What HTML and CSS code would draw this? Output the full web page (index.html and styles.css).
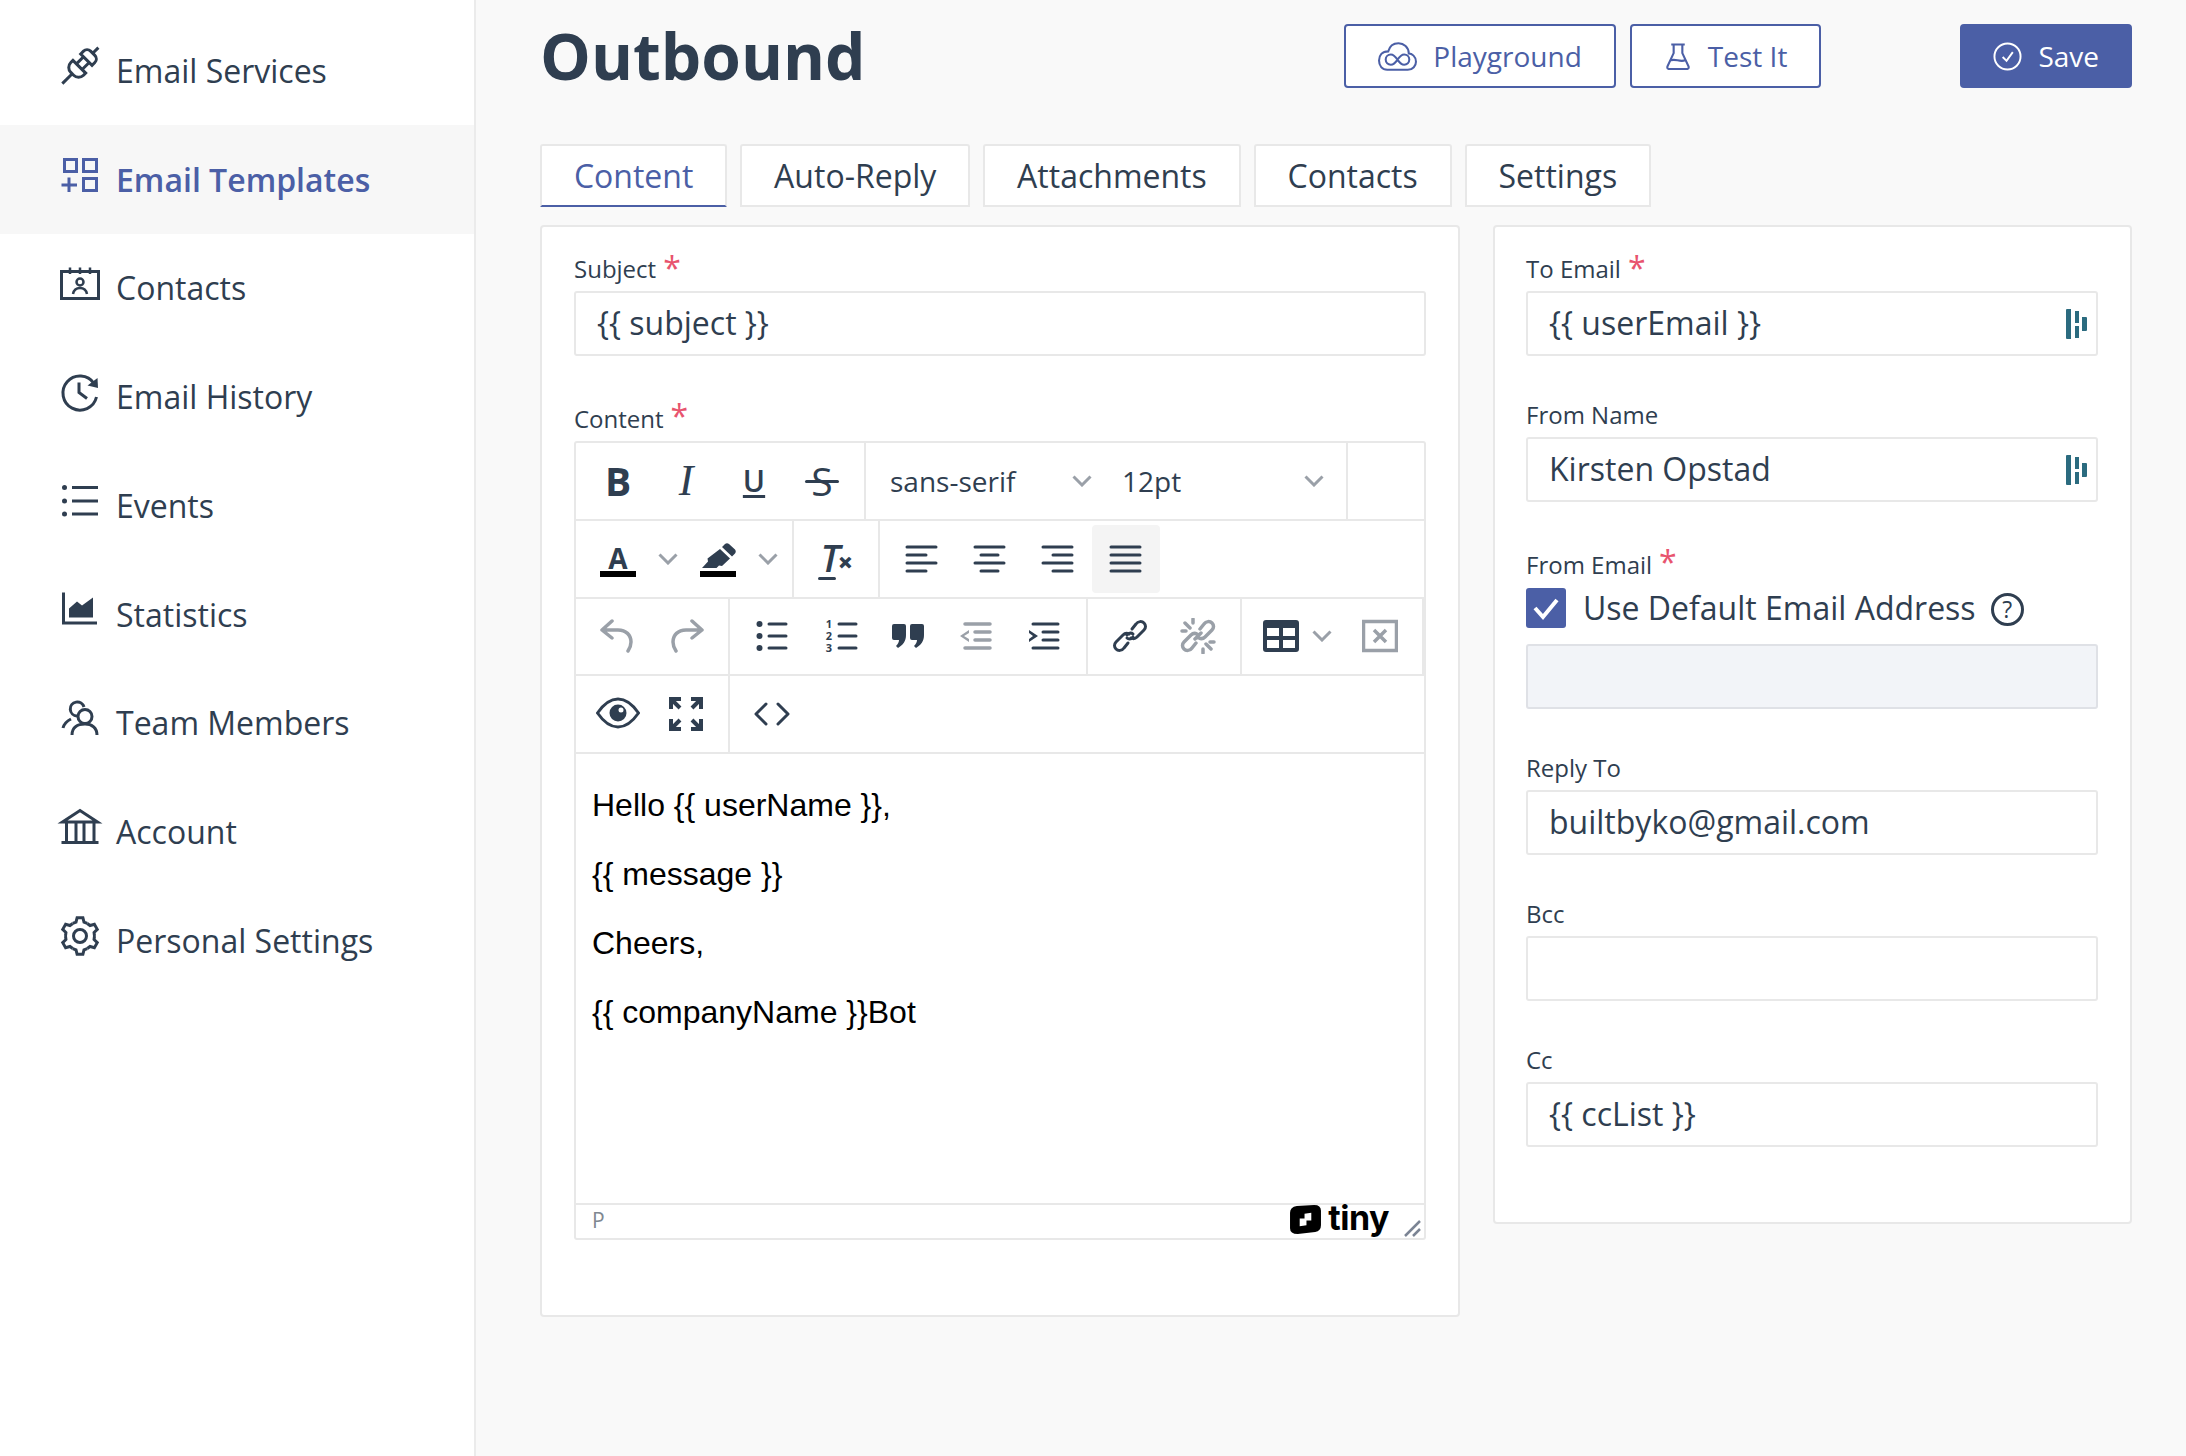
FILE: index.html
```html
<!DOCTYPE html>
<html lang="en">
<head>
<meta charset="utf-8">
<title>Outbound</title>
<link rel="stylesheet" href="styles.css">
</head>
<body>
<div class="app">
  <nav class="sidebar">
    <a class="nav-item"><svg class="nav-icon" viewBox="0 0 40 40"><g transform="rotate(45 20 20)"><path d="M20 -6V2M12 11V7a5 5 0 0 1 5-5h6a5 5 0 0 1 5 5v4zM16 11v10M24 11v10M11 21h18v3a7 7 0 0 1-7 7h-4a7 7 0 0 1-7-7zM20 31v14"/></g></svg><span>Email Services</span></a>
    <a class="nav-item active"><svg class="nav-icon" viewBox="0 0 40 40"><path d="M4.500 4.500h12v12h-12zM23.500 4.500h13v12h-13zM23.500 23.500h13v12h-13zM1.500 30H17M9 22.500V37"/></svg><span>Email Templates</span></a>
    <a class="nav-item"><svg class="nav-icon" viewBox="0 0 40 40"><path d="M1.500 7.500h37v27h-37z"/><path class="fine" d="M10 3.500V10M20 3.500V10M30 3.500V10M13 30c1-5 4-6 7-6s6 1 7 6"/><circle class="fine" cx="20" cy="18" r="3.500"/></svg><span>Contacts</span></a>
    <a class="nav-item"><svg class="nav-icon" viewBox="0 0 40 40"><path d="M34 10.500A17 17 0 1 0 36.500 24M19 9.500v10l8 6"/><path class="solid" d="M27.500 12.500 38 15 37.500 5z"/></svg><span>Email History</span></a>
    <a class="nav-item"><svg class="nav-icon" viewBox="0 0 40 40"><path d="M12 6.500h26M12 20h26M12 33h26"/><circle class="solid" cx="4.500" cy="6.500" r="2.500"/><circle class="solid" cx="4.500" cy="20" r="2.500"/><circle class="solid" cx="4.500" cy="33" r="2.500"/></svg><span>Events</span></a>
    <a class="nav-item"><svg class="nav-icon" viewBox="0 0 40 40"><path d="M3.500 2.500V33H37"/><path class="solid" d="M9 27.500v-9l8-7 5 4 11-8v20z"/></svg><span>Statistics</span></a>
    <a class="nav-item"><svg class="nav-icon" viewBox="0 0 40 40"><circle cx="25" cy="17.500" r="7"/><path d="M12 36c0-8 6-11 13-11s12 4 12 11M17 17a7 7 0 1 1 7-9M3 29c1-4 4-7 8-9"/></svg><span>Team Members</span></a>
    <a class="nav-item"><svg class="nav-icon" viewBox="0 0 40 40"><path d="M2.500 14 20 2.500 37.500 14zM6.500 14v19M16 14v19M24 14v19M34 14v19M1.500 34.500h37"/></svg><span>Account</span></a>
    <a class="nav-item"><svg class="nav-icon" viewBox="0 0 40 40"><circle cx="20" cy="20" r="6.500"/><path d="M12.750 7.440 16 6.060l1.110-4.330h5.780L24 6.060l3.250 1.380"/><path transform="rotate(60 20 20)" d="M12.750 7.440 16 6.060l1.110-4.330h5.780L24 6.060l3.250 1.380"/><path transform="rotate(120 20 20)" d="M12.750 7.440 16 6.060l1.110-4.330h5.780L24 6.060l3.250 1.380"/><path transform="rotate(180 20 20)" d="M12.750 7.440 16 6.060l1.110-4.330h5.780L24 6.060l3.250 1.380"/><path transform="rotate(240 20 20)" d="M12.750 7.440 16 6.060l1.110-4.330h5.780L24 6.060l3.250 1.380"/><path transform="rotate(300 20 20)" d="M12.750 7.440 16 6.060l1.110-4.330h5.780L24 6.060l3.250 1.380"/></svg><span>Personal Settings</span></a>
  </nav>

  <main class="main">
    <header class="page-head">
      <h1 class="title">Outbound</h1>
      <button class="btn btn-outline"><svg class="btn-icon" viewBox="1 1 38 28"><path d="M10 28h20c5 0 8-4 8-8 0-5-4-8-7-8 0-6-5-10-10-10-6 0-9 4-10 8-6 0-9 4-9 9s3 9 8 9zM20 18c-2-3-4-5-6.500-5a4.800 4.800 0 0 0 0 10c2.500 0 4.500-2 6.500-5s4-5 6.500-5a4.800 4.800 0 0 1 0 10c-2.500 0-4.500-2-6.500-5z"/></svg>Playground</button>
      <button class="btn btn-outline"><svg class="btn-icon flask" viewBox="0 0 26 28"><path d="M6 1.500h14M8.500 1.500v9L2 24.500q-.5 2.500 2 2.500h18q2.500 0 2-2.500l-6.500-14v-9M5.500 18c5-2 9 2 15 0"/></svg>Test It</button>
      <button class="btn btn-solid"><svg class="btn-icon check" viewBox="0 0 30 30"><circle cx="15" cy="15" r="13.500"/><path d="M10 15.500l4 4 6.500-9"/></svg>Save</button>
    </header>

    <div class="tabs">
      <div class="tab tab-active">Content</div>
      <div class="tab">Auto-Reply</div>
      <div class="tab">Attachments</div>
      <div class="tab">Contacts</div>
      <div class="tab">Settings</div>
    </div>

    <div class="columns">
      <section class="card card-left">
        <div class="field">
          <div class="label">Subject <span class="req">*</span></div>
          <div class="input">{{ subject }}</div>
        </div>
        <div class="field">
          <div class="label label-tight">Content <span class="req">*</span></div>
          <div class="editor">
            <div class="tb-row">
              <div class="tb-group">
                <div class="tb-btn"><span class="g-bold">B</span></div>
                <div class="tb-btn"><span class="g-italic">I</span></div>
                <div class="tb-btn"><span class="g-under">U</span></div>
                <div class="tb-btn"><span class="g-strike">S</span></div>
              </div>
              <div class="tb-group tb-selects">
                <div class="tb-select">sans-serif<svg class="chev" viewBox="0 0 20 12"><path d="M1.500 1.500 10 10l8.500-8.500"/></svg></div>
                <div class="tb-select">12pt<svg class="chev" viewBox="0 0 20 12"><path d="M1.500 1.500 10 10l8.500-8.500"/></svg></div>
              </div>
            </div>
            <div class="tb-row">
              <div class="tb-group">
                <div class="tb-split"><div class="tb-main"><span class="g-color">A</span></div><svg class="chev" viewBox="0 0 20 12"><path d="M1.500 1.500 10 10l8.500-8.500"/></svg></div>
                <div class="tb-split"><div class="tb-main tb-marker"><svg class="ic marker" viewBox="0 0 36 26"><path class="solid" d="M25 1q2-1.500 4 0l6 5.500q1.500 2 0 4l-3 3L22 4zM20 6l10 9.500-8 7.500-3-.5-2.500 2.500H2l6-6.500-.5-3z"/></svg><i class="swatch"></i></div><svg class="chev" viewBox="0 0 20 12"><path d="M1.500 1.500 10 10l8.500-8.500"/></svg></div>
              </div>
              <div class="tb-group">
                <div class="tb-btn"><span class="g-clear">T<b>×</b></span></div>
              </div>
              <div class="tb-group tb-last">
                <div class="tb-btn"><svg class="ic" viewBox="0 0 36 36"><path class="line" d="M3 6h29M3 14h19M3 22h29M3 30h19"/></svg></div>
                <div class="tb-btn"><svg class="ic" viewBox="0 0 36 36"><path class="line" d="M3 6h29M9 14h17M3 22h29M9 30h17"/></svg></div>
                <div class="tb-btn"><svg class="ic" viewBox="0 0 36 36"><path class="line" d="M3 6h29M13 14h19M3 22h29M13 30h19"/></svg></div>
                <div class="tb-btn tb-on"><svg class="ic" viewBox="0 0 36 36"><path class="line" d="M3 6h29M3 14h29M3 22h29M3 30h29"/></svg></div>
              </div>
            </div>
            <div class="tb-row">
              <div class="tb-group">
                <div class="tb-btn"><svg class="ic off" viewBox="0 0 36 36"><path class="line" d="M12 3 2 12l10 8M3 12h15c8 0 13 5 13 12 0 3-1 6-3 9"/></svg></div>
                <div class="tb-btn"><svg class="ic off" viewBox="0 0 36 36"><path class="line" d="M24 3l10 9-10 8M33 12H18C10 12 5 17 5 24c0 3 1 6 3 9"/></svg></div>
              </div>
              <div class="tb-group">
                <div class="tb-btn"><svg class="ic" viewBox="0 0 36 36"><circle class="solid" cx="5.500" cy="6" r="3"/><circle class="solid" cx="5.500" cy="18" r="3"/><circle class="solid" cx="5.500" cy="30" r="3"/><path class="line" d="M15 6h17M15 18h17M15 30h17"/></svg></div>
                <div class="tb-btn tb-numlist"><span class="nums"><span>1</span><span>2</span><span>3</span></span><svg class="numlines" viewBox="0 0 22 36"><path d="M3 6h17M3 18h17M3 30h17"/></svg></div>
                <div class="tb-btn"><svg class="ic" viewBox="0 0 36 36"><path class="solid" d="M5 5h10q2 0 2 2v9c0 6-3 10-8 13l-2-2c2-2 3-4 3-6H5q-2 0-2-2V7q0-2 2-2zM23 5h10q2 0 2 2v9c0 6-3 10-8 13l-2-2c2-2 3-4 3-6h-5q-2 0-2-2V7q0-2 2-2z" transform="translate(-1 1)"/></svg></div>
                <div class="tb-btn"><svg class="ic off" viewBox="0 0 36 36"><path class="line" d="M7 6h25M17 14h15M17 22h15M7 30h25"/><path class="solid" d="M11 12 2 18l9 6v-3l-5-3 5-3z"/></svg></div>
                <div class="tb-btn"><svg class="ic" viewBox="0 0 36 36"><path class="line" d="M7 6h25M17 14h15M17 22h15M7 30h25"/><path class="solid" d="M3 12l9 6-9 6v-3l4-3-4-3z"/></svg></div>
              </div>
              <div class="tb-group">
                <div class="tb-btn"><svg class="ic" viewBox="0 0 36 36"><path class="line" d="M21 19c-2 3-5 2-6 1M15 17c2-3 5-2 6-1"/><path class="line" d="M16 25l-4 5c-2 3-6 3-8 1s-2-5 0-7l7-7c2-2 4-2 6-1M20 11l4-5c2-3 6-3 8-1s2 5 0 7l-7 7c-2 2-4 2-6 1"/></svg></div>
                <div class="tb-btn"><svg class="ic off" viewBox="0 0 36 36"><path class="line" d="M16 25l-4 5c-2 3-6 3-8 1s-2-5 0-7l7-7c2-2 4-2 6-1M20 11l4-5c2-3 6-3 8-1s2 5 0 7l-7 7c-2 2-4 2-6 1M15 21l6-6M5 5l5 5M2 13h4M13 1v4M31 31l-5-5M34 24h-4M23 35v-4"/></svg></div>
              </div>
              <div class="tb-group">
                <div class="tb-split tb-split-small"><div class="tb-main"><svg class="ic" viewBox="0 0 36 36"><path class="solid" fill-rule="evenodd" d="M3 2h30q3 0 3 3v26q0 3-3 3H3q-3 0-3-3V5q0-3 3-3zM4 10v8h12v-8zM20 10v8h12v-8zM4 22v8h12v-8zM20 22v8h12v-8z"/></svg></div><svg class="chev" viewBox="0 0 20 12"><path d="M1.500 1.500 10 10l8.500-8.500"/></svg></div>
                <div class="tb-btn"><svg class="ic off" viewBox="0 0 36 36"><path class="box" d="M1.500 3.500h33v29h-33zM12 12l12 12M24 12 12 24"/></svg></div>
              </div>
            </div>
            <div class="tb-row">
              <div class="tb-group">
                <div class="tb-btn"><svg class="ic ic-wide" viewBox="0 0 44 36"><path class="box" d="M1.500 17C7 9 14 3 22 3s15 6 20.500 14C37 25 30 31 22 31S7 25 1.500 17z"/><circle class="solid" cx="22" cy="17" r="8.500"/><circle class="hole" cx="25" cy="14" r="2.500"/></svg></div>
                <div class="tb-btn"><svg class="ic" viewBox="0 0 36 36"><path class="arrows" d="M3 13V3h10M3 3l9 9M23 3h10v10M33 3l-9 9M3 23v10h10M3 33l9-9M23 33h10V23M33 33l-9-9"/></svg></div>
              </div>
              <div class="tb-group tb-last">
                <div class="tb-btn"><svg class="ic" viewBox="0 0 36 36"><path class="line" d="M12 8 2 18l10 10M24 8l10 10-10 10"/></svg></div>
              </div>
            </div>
            <div class="editor-body">
              <p>Hello {{ userName }},</p>
              <p>{{ message }}</p>
              <p>Cheers,</p>
              <p>{{ companyName }}Bot</p>
            </div>
            <div class="status">
              <span class="status-path">P</span>
              <span class="tiny"><svg class="tiny-logo" viewBox="0 0 32 30"><path fill-rule="evenodd" d="M7 1 25 0q7 0 7 6v15q0 6-6 7L8 30q-8 0-8-6V8q0-6 7-7zM15 9v5h-5v8l7-1v-5h5V8z"/></svg>tiny</span>
              <svg class="grip" viewBox="0 0 18 18"><path d="M1 16 16 1M9 16l7-7"/></svg>
            </div>
          </div>
        </div>
      </section>

      <section class="card card-right">
        <div class="field">
          <div class="label">To Email <span class="req">*</span></div>
          <div class="input input-dash">{{ userEmail }}<svg class="dash" viewBox="0 0 21 30"><path d="M0 1q0-1 1-1h4v30H1q-1 0-1-1zM9 2h4v12H9zM9 17h4v12H9zM16 8h4q1 0 1 1v12q0 1-1 1h-4z"/></svg></div>
        </div>
        <div class="field">
          <div class="label">From Name</div>
          <div class="input input-dash">Kirsten Opstad<svg class="dash" viewBox="0 0 21 30"><path d="M0 1q0-1 1-1h4v30H1q-1 0-1-1zM9 2h4v12H9zM9 17h4v12H9zM16 8h4q1 0 1 1v12q0 1-1 1h-4z"/></svg></div>
        </div>
        <div class="field">
          <div class="label label-tight">From Email <span class="req">*</span></div>
          <div class="check-row">
            <span class="checkbox"><svg viewBox="0 0 40 40"><path d="M9 20l8 9 14-17"/></svg></span>
            <span class="check-text">Use Default Email Address</span>
            <span class="help">?</span>
          </div>
          <div class="input input-disabled"></div>
        </div>
        <div class="field">
          <div class="label">Reply To</div>
          <div class="input">builtbyko@gmail.com</div>
        </div>
        <div class="field">
          <div class="label">Bcc</div>
          <div class="input"></div>
        </div>
        <div class="field">
          <div class="label">Cc</div>
          <div class="input">{{ ccList }}</div>
        </div>
      </section>
    </div>
  </main>
</div>
</body>
</html>
```
FILE: styles.css
```css
* { box-sizing: border-box; }
html, body { margin: 0; padding: 0; }
body {
  font-family: "Open Sans", "Liberation Sans", sans-serif;
  color: #2f3e50;
  background: #f9f9f9;
}
.app { display: flex; height: 1456px; overflow: hidden; }

/* sidebar */
.sidebar {
  width: 476px;
  flex: none;
  background: #fff;
  border-right: 2px solid #ebebeb;
  padding-top: 16px;
}
.nav-item {
  display: flex;
  align-items: center;
  gap: 16px;
  height: 108.750px;
  padding-left: 60px;
  font-size: 32px;
  color: #2f3e50;
}
.nav-item.active { background: #f7f7f7; color: #4b5fa6; font-weight: 600; }
.nav-icon {
  width: 40px;
  height: 40px;
  flex: none;
  margin-top: -8px;
  overflow: visible;
  fill: none;
  stroke: currentColor;
  stroke-width: 3;
}
.nav-icon .fine { stroke-width: 2.500; }
.nav-icon .solid { fill: currentColor; stroke: none; }

/* header */
.main { flex: 1; padding: 24px 54px 0 64px; min-width: 0; }
.page-head { display: flex; align-items: center; gap: 14px; height: 64px; }
.title { flex: 1; margin: 0; font-size: 64px; line-height: 64px; font-weight: 700; color: #2f3e50; }
.btn {
  display: flex;
  align-items: center;
  justify-content: center;
  gap: 16px;
  height: 64px;
  padding: 0 32px;
  border-radius: 4px;
  font: 400 28px "Open Sans", sans-serif;
  border: 2px solid #4b5fa6;
}
.btn-outline { background: #fff; color: #4b5fa6; }
.btn-solid { background: #4b5fa6; color: #fff; margin-left: 125px; padding: 0 31px; }
.btn-icon { width: 39px; height: 29px; fill: none; stroke: currentColor; stroke-width: 2; }
.btn-icon.flask { width: 26px; height: 27px; margin: 0 1px; stroke-width: 2.200; }
.btn-icon.check { width: 29px; height: 29px; }

/* tabs */
.tabs { display: flex; gap: 13px; margin-top: 56px; }
.tab {
  height: 63px;
  padding: 0 31.900px;
  display: flex;
  align-items: center;
  background: #fff;
  border: 2px solid #e8e8e8;
  border-radius: 3px 3px 0 0;
  font-size: 32px;
  color: #2f3e50;
}
.tab-active { color: #4b5fa6; border-bottom-color: #4b5fa6; }

/* cards */
.columns { display: grid; grid-template-columns: 920px 639px; gap: 33px; align-items: start; margin-top: 18px; }
.card {
  background: #fff;
  border: 2px solid #e8e8e8;
  border-radius: 4px;
  padding: 26px 32px 0;
}
.card-left { height: 1092px; }
.card-right { height: 999px; padding-left: 31px; }
.field { margin-bottom: 43px; }
.label {
  display: flex;
  align-items: center;
  gap: 7px;
  height: 38px;
  padding-bottom: 8px;
  font-size: 24px;
  color: #2f3e50;
}
.label-tight { height: 42px; padding-bottom: 3px; }
.card-right .label-tight { height: 43px; padding-bottom: 4px; }
.req { color: #e8546e; font-size: 32px; line-height: 1; }
.label-tight .req { margin-top: -5px; }
.input {
  height: 65px;
  border: 2px solid #e8e8e8;
  border-radius: 3px;
  padding: 0 21px 2px;
  display: flex;
  align-items: center;
  justify-content: space-between;
  font-size: 32px;
  background: #fff;
}
.dash { width: 21px; height: 30px; fill: #2b6b7f; margin-right: -12px; margin-top: 2px; }
.input-disabled { background: #f2f4f8; border-color: #dfe1e6; }
.check-row { display: flex; align-items: center; height: 40px; margin-bottom: 16px; }
.checkbox {
  width: 40px;
  height: 40px;
  border-radius: 3px;
  background: #4b5fa6;
}
.checkbox svg { display: block; fill: none; stroke: #fff; stroke-width: 4; }
.check-text { margin-left: 17px; font-size: 32px; padding-bottom: 2px; }
.help {
  margin-left: 15px;
  width: 33px;
  height: 33px;
  border: 3px solid #2f3e50;
  border-radius: 50%;
  display: flex;
  align-items: center;
  justify-content: center;
  font-size: 23px;
  margin-top: 2px;
}

/* editor */
.editor { border: 2px solid #e8e8e8; border-radius: 3px; }
.tb-row { display: flex; height: 77.750px; border-bottom: 2px solid #e8e8e8; }
.tb-group { display: flex; align-items: center; padding: 0 8px; border-right: 2px solid #e8e8e8; }
.tb-last { border-right: 0; }
.tb-btn {
  width: 68px;
  height: 68px;
  border-radius: 4px;
  display: flex;
  align-items: center;
  justify-content: center;
  color: #2f3e50;
}
.tb-on { background: #f4f4f4; }
.tb-split { display: flex; align-items: center; width: 100px; }
.tb-main { width: 68px; height: 68px; display: flex; flex-direction: column; align-items: center; justify-content: center; }
.tb-split-small { width: 96px; }
.tb-split-small .tb-main { width: 62px; }
.tb-selects { padding: 0 8px; }
.tb-select {
  width: 232px;
  height: 68px;
  padding: 0 14px 0 16px;
  display: flex;
  align-items: center;
  justify-content: space-between;
  font-size: 28px;
}
.chev { width: 20px; height: 12px; flex: none; fill: none; stroke: #9aa0a8; stroke-width: 3; }
.tb-split .chev { margin-left: 6px; }
.tb-split-small .chev { margin-left: 0; }
.ic { width: 36px; height: 36px; display: block; fill: none; stroke: #2f3e50; }
.ic-wide { width: 44px; }
.ic .line { fill: none; stroke: #2f3e50; stroke-width: 3; stroke-linecap: round; stroke-linejoin: round; }
.ic .box { fill: none; stroke: #2f3e50; stroke-width: 3; }
.ic .arrows { fill: none; stroke: #2f3e50; stroke-width: 4; }
.ic .solid { fill: #2f3e50; stroke: none; }
.ic .hole { fill: #fff; stroke: none; }
.ic.off .line, .ic.off .box { stroke: #9aa0a8; stroke-width: 3.500; }
.ic.off .solid { fill: #9aa0a8; }
.nums { display: flex; flex-direction: column; width: 14px; font: 700 11px/12px "Open Sans", sans-serif; text-align: center; }
.numlines { width: 22px; height: 36px; fill: none; stroke: #2f3e50; stroke-width: 3; stroke-linecap: round; }

.g-bold { font: 700 39px/1 "Open Sans", sans-serif; }
.g-italic { font: italic 400 44px/1 "Liberation Serif", serif; }
.g-under { font: 600 30px/1 "Open Sans", sans-serif; text-decoration: underline; text-decoration-thickness: 3px; text-underline-offset: 3px; }
.g-strike { font: 500 39px/1 "Open Sans", sans-serif; position: relative; }
.g-strike::after { content: ""; position: absolute; left: -6px; right: -6px; top: 19px; height: 3px; border-radius: 2px; background: #2f3e50; }
.g-color { font: 700 28px/26px "Open Sans", sans-serif; display: block; border-bottom: 6px solid #000; width: 36px; text-align: center; height: 32px; margin-top: 4px; }
.tb-marker .marker { width: 36px; height: 26px; margin-top: 2px; margin-bottom: 2px; }
.swatch { display: block; width: 36px; height: 6px; background: #000; }
.g-clear { font: italic 600 38px/34px "Open Sans", sans-serif; position: relative; display: block; width: 31px; margin-top: -4px; }
.g-clear b { position: absolute; left: 17px; top: 10px; font: 800 27px/24px "Open Sans", sans-serif; }
.g-clear::after { content: ""; position: absolute; left: -3px; top: 37px; width: 18px; height: 3px; border-radius: 2px; background: #2f3e50; }

.editor-body {
  height: 449px;
  padding: 28.500px 16px 0;
  font: 400 32px/45px "Liberation Sans", sans-serif;
  color: #000;
}
.editor-body p { margin: 0 0 24.300px; }
.status {
  height: 35px;
  border-top: 2px solid #e8e8e8;
  display: flex;
  align-items: center;
  padding: 0 2px 0 16px;
}
.status-path { flex: 1; font-size: 21px; color: #7f8891; margin-top: -3px; }
.tiny { display: flex; align-items: center; gap: 7px; color: #000; font: 700 34px/32px "Inter", sans-serif; letter-spacing: -0.5px; margin-right: 15px; margin-top: -7px; }
.tiny-logo { width: 31px; height: 29px; fill: #000; margin-top: 3px; }
.grip { width: 18px; height: 18px; align-self: flex-end; fill: none; stroke: #7b8494; stroke-width: 2.500; }
```
